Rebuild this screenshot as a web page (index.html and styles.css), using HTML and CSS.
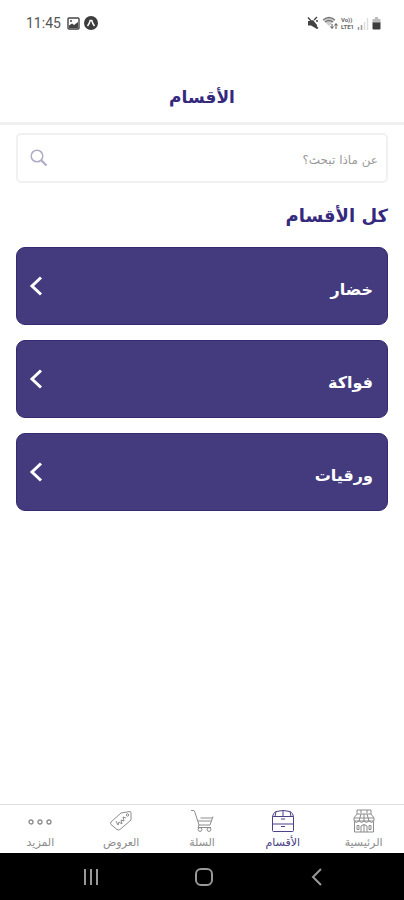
FILE: index.html
```html
<!DOCTYPE html>
<html lang="ar" dir="rtl">
<head>
<meta charset="utf-8">
<meta name="viewport" content="width=device-width, initial-scale=1">
<title>الأقسام</title>
<link rel="stylesheet" href="styles.css">
</head>
<body>
<div class="status" dir="ltr">
  <div class="status-group">
    <span class="clock">11:45</span>
    <svg width="13" height="13" viewBox="0 0 13 13"><rect x="1" y="1" width="11" height="11" rx="1" fill="none" stroke="#444" stroke-width="1.4"/><path d="M2 11V8.500l3-2 2 1.500 4-3v6z" fill="#444"/><circle cx="4" cy="4" r="1" fill="#444"/></svg>
    <svg width="14" height="14" viewBox="0 0 14 14"><circle cx="7" cy="7" r="7" fill="#3c3c3c"/><path d="M3.500 10Q5.500 7.500 6.200 4.500h1.600Q8.500 7.500 10.500 10" fill="none" stroke="#fff" stroke-width="1.500"/></svg>
  </div>
  <div class="status-group status-right">
    <svg width="12" height="14" viewBox="0 0 12 14"><path d="M1 5h3l2-1 4 5v4L4 9.500H1z" fill="#444"/><path d="M1 1.500 11 12.500M7 4l3-3M9 5h2" stroke="#444" stroke-width="1.400"/></svg>
    <svg width="16" height="14" viewBox="0 0 16 14"><path d="M1 4Q7-1 13 4L7 10z" fill="#ccc"/><path d="M1 4Q7-1 13 4M3 6q4-3 8 0" fill="none" stroke="#777" stroke-width="1.300"/><path d="M10 8v4M8.500 10.500 10 12.500l1.500-2M14 13V8M12.500 9.500 14 7.500l1.500 2" fill="none" stroke="#555"/></svg>
    <span class="volte">Vo))<br>LTE1</span>
    <svg width="12" height="13" viewBox="0 0 12 13"><path d="M1.500 13v-3M4.500 13V8" stroke="#999" stroke-width="1.500"/><path d="M7.500 13V5M10.500 13V1" stroke="#ddd" stroke-width="1.500"/></svg>
    <svg width="9" height="13" viewBox="0 0 9 13"><path d="M3 0h3v2h2.500v4h-8V2H3z" fill="#bbb"/><path d="M.5 5.500h8v6a1 1 0 0 1-1 1h-6a1 1 0 0 1-1-1z" fill="#3c3c3c"/></svg>
  </div>
</div>
<header class="header"><h1>الأقسام</h1></header>
<main class="main">
  <form class="search" role="search">
    <input type="search" aria-label="بحث" placeholder="عن ماذا تبحث؟">
    <button type="button" aria-label="ابحث"><svg width="18" height="18" viewBox="0 0 18 18" fill="none" stroke="#b0abc6"><circle cx="7" cy="7" r="5.800" stroke-width="1.500"/><path d="m11.500 11.500 5 5" stroke-width="2.200"/></svg></button>
  </form>
  <h2>كل الأقسام</h2>
  <div class="cards">
    <a class="card" href="#veg"><span>خضار</span><svg width="14" height="22" viewBox="0 0 14 22"><path d="M12 2.500 3 11l9 8.500"/></svg></a>
    <a class="card" href="#fruit"><span>فواكة</span><svg width="14" height="22" viewBox="0 0 14 22"><path d="M12 2.500 3 11l9 8.500"/></svg></a>
    <a class="card" href="#leafy"><span>ورقيات</span><svg width="14" height="22" viewBox="0 0 14 22"><path d="M12 2.500 3 11l9 8.500"/></svg></a>
  </div>
</main>
<nav class="tabs">
  <a href="#home"><svg width="24" height="24" viewBox="0 0 24 24"><path d="M5 1h14v4l3 4v3H2V9l3-4zM5 5h14M2 9h20M9 1v3M15 1v3M9 5 7 12M15 5l2 7M12 5v7M2 12q2.500 3 5 0 2.500 3 5 0 2.500 3 5 0 2.500 3 5 0M2.500 13v10h19V13M9 23v-6q3-3 6 0v6M12 15.500V23M5 16.500h2v4H5zM17 16.500h2v4h-2z"/></svg><span>الرئيسية</span></a>
  <a href="#sections" class="active" aria-current="page"><svg width="24" height="24" viewBox="0 0 24 24"><path d="M1.500 7.500Q2 4 5 2.500q7-2 14 0 3 1.500 3.500 5v14q0 1-1 1h-19q-1 0-1-1zM1.500 7.500h21M1.500 15h21M5 2.500l-1 5M12 1.500v6M19 2.500l1 5M10 10h4M10 17.500h4"/></svg><span>الأقسام</span></a>
  <a href="#cart"><svg width="24" height="24" viewBox="0 0 24 24"><path d="M1 1.500h3l1 2L9 16h11l3-8.500M10.500 9H22M8 12h13M9 16l-1 2.500h13"/><circle cx="10" cy="20.500" r="1.900"/><circle cx="19" cy="20.500" r="1.900"/></svg><span>السلة</span></a>
  <a href="#offers"><svg width="24" height="24" viewBox="0 0 24 24"><path d="m2 13 10-9 9-1.500q1 0 1 1V11L11 20.500q-1.500 1-3 0l-6-5q-1-1.500 0-2.500zM7 12l2 4 1-3 3 2-1-4 3 1-1-4 3 1"/><circle cx="18.500" cy="6" r="1.200"/></svg><span>العروض</span></a>
  <a href="#more"><svg width="24" height="24" viewBox="0 0 24 24"><g stroke-width="1.300"><circle cx="3" cy="13" r="2"/><circle cx="12" cy="13" r="2"/><circle cx="21" cy="13" r="2"/></g></svg><span>المزيد</span></a>
</nav>
<div class="system" dir="ltr">
  <button type="button" aria-label="التطبيقات الأخيرة"><svg width="20" height="20" viewBox="0 0 20 20"><path d="M4 2v16M10 2v16M16 2v16"/></svg></button>
  <button type="button" aria-label="الشاشة الرئيسية"><svg width="20" height="20" viewBox="0 0 20 20"><rect x="2" y="2" width="16" height="16" rx="5"/></svg></button>
  <button type="button" aria-label="رجوع"><svg width="20" height="20" viewBox="0 0 20 20"><path d="M14 2 6 10l8 8"/></svg></button>
</div>
</body>
</html>
```
FILE: styles.css
```css
* {
  box-sizing: border-box;
}

body {
  margin: 0;
  min-height: 100vh;
  display: flex;
  flex-direction: column;
  background: #fff;
  color: #35297d;
  font-family: "DejaVu Sans", sans-serif;
}

svg {
  display: block;
  flex: none;
}

h1,
h2 {
  margin: 0;
  font-weight: 700;
}

.status {
  display: flex;
  justify-content: space-between;
  align-items: center;
  height: 46px;
  padding: 0 23px 0 26px;
}

.status-group {
  display: flex;
  align-items: center;
  gap: 4px;
}

.status-right {
  gap: 3px;
}

.clock {
  color: #555;
  font: 14px/16px Roboto, sans-serif;
  margin-right: 2px;
}

.volte {
  color: #666;
  font: 700 6px/7px Roboto, sans-serif;
}

.header {
  padding: 37px 16px 11px;
  border-bottom: 3px solid #f0f0f0;
  text-align: center;
}

.header h1 {
  font-size: 17px;
  line-height: 28px;
}

.main {
  flex: 1;
  padding: 8px 16px;
}

.search {
  display: flex;
  align-items: center;
  height: 50px;
  padding: 0 8px 0 12px;
  border: 2px solid #f1f1f1;
  border-radius: 5px;
}

.search input {
  flex: 1;
  min-width: 0;
  padding: 3px 0 0;
  border: 0;
  outline: 0;
  background: none;
  color: #555;
  font: 12px/20px "DejaVu Sans", sans-serif;
}

.search input::placeholder {
  color: #999;
  opacity: 1;
}

.search button {
  padding: 0;
  border: 0;
  background: none;
}

.main h2 {
  margin: 18px 0 16px;
  font-size: 18px;
  line-height: 30px;
}

.cards {
  display: flex;
  flex-direction: column;
  gap: 15px;
}

.card {
  display: flex;
  align-items: center;
  justify-content: space-between;
  height: 78px;
  padding: 0 14px 0 12px;
  border: 1px solid #35296f;
  border-radius: 9px;
  background: #443a7e;
  color: #fff;
  font-size: 16px;
  font-weight: 700;
  line-height: 24px;
  text-decoration: none;
}

.card span {
  padding-top: 8px;
}

.card path {
  fill: none;
  stroke: #fff;
  stroke-width: 3;
}

.tabs {
  display: grid;
  grid-template-columns: repeat(5, 1fr);
  height: 49px;
  border-top: 1px solid #ddd;
}

.tabs a {
  display: flex;
  flex-direction: column;
  align-items: center;
  padding-top: 4px;
  color: #8c8c8c;
  font-size: 11px;
  line-height: 20px;
  text-decoration: none;
  white-space: nowrap;
}

.tabs svg {
  fill: none;
  stroke: currentColor;
  stroke-width: 1;
}

.tabs .active {
  color: #4b4186;
}

.system {
  display: grid;
  grid-template-columns: repeat(3, 1fr);
  justify-items: center;
  align-items: center;
  height: 47px;
  padding: 0 31px 0 35px;
  background: #000;
}

.system button {
  padding: 0;
  border: 0;
  background: none;
}

.system svg {
  fill: none;
  stroke: #999;
  stroke-width: 2;
}
```
